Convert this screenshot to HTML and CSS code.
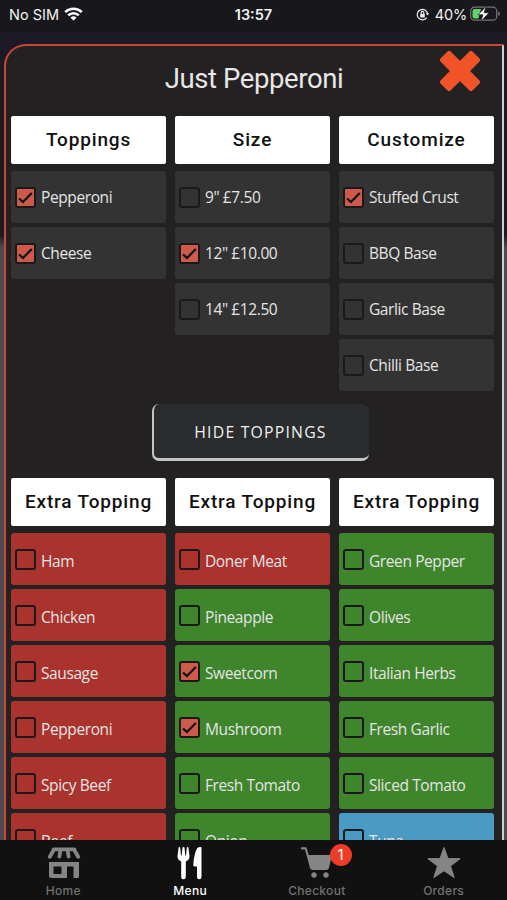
FILE: index.html
```
<!DOCTYPE html>
<html lang="en">

<head>
    <meta charset="UTF-8">
    <meta name="viewport" content="width=device-width, initial-scale=1.0">
    <title>Just Pepperoni</title>
    <link rel="stylesheet" href="styles.css">
</head>

<body>
    <div class="app">
        <!-- Status bar -->
        <header class="status-bar">
            <div class="status-left">
                <span class="carrier">No SIM</span>
                <svg width="19" height="14" viewBox="0 0 19 14" fill="none" stroke="#fff" stroke-width="2.5">
                    <path d="M1.2 5.2a12 12 0 0 1 16.6 0M4.2 8.4a7.6 7.6 0 0 1 10.6 0" />
                    <path d="M9.5 13.6L6.5 10.7a4.3 4.3 0 0 1 6 0z" fill="#fff" stroke="none" />
                </svg>
            </div>
            <span class="clock">13:57</span>
            <div class="status-right">
                <svg width="13" height="13" viewBox="0 0 13 13" fill="none" stroke="#eee" stroke-width="1.2">
                    <path d="M10.7 9.6a5.2 5.2 0 1 1 .9-3.8" />
                    <path d="M9.8 5.2h3.2L11.6 7.6z" fill="#eee" stroke="none" />
                    <path d="M4.2 6h4.6v3.5H4.2z" fill="#eee" stroke="none" />
                    <path d="M5.2 6V4.7a1.3 1.3 0 0 1 2.6 0V6" />
                </svg>
                <span class="battery-text">40%</span>
                <svg width="30" height="16" viewBox="0 0 30 16">
                    <rect x=".7" y="1.2" width="26" height="13" rx="3.8" fill="none" stroke="#77767b" stroke-width="1.2" />
                    <path d="M28.2 5.3q1.7.6 1.7 2.4t-1.7 2.4z" fill="#77767b" />
                    <path d="M4.5 2.9H11L8.5 12.5h-4a2 2 0 0 1-2-2V4.9a2 2 0 0 1 2-2z" fill="#5bd769" />
                    <path d="M16.3.3L8 8.8h5L10.6 15.7 19 6.8h-5z" fill="#fff" stroke="#18171c" stroke-width=".7" />
                </svg>
            </div>
        </header>

        <!-- Pizza options -->
        <main class="content">
            <section class="panel">
                <div class="panel-title">
                    <h1>Just Pepperoni</h1>
                    <button class="close" aria-label="Close">
                        <svg width="42" height="42" viewBox="0 0 42 42" fill="#f15329" stroke="#f15329" stroke-width="5" stroke-linejoin="round">
                            <path d="M10 3.5L21 14.4 32 3.5 38.5 10 27.6 21 38.5 32 32 38.5 21 27.6 10 38.5 3.5 32 14.4 21 3.5 10z" />
                        </svg>
                    </button>
                </div>

                <div class="columns options">
                    <div class="column">
                        <h2>Toppings</h2>
                        <label class="item"><input type="checkbox" checked><span>Pepperoni</span></label>
                        <label class="item"><input type="checkbox" checked><span>Cheese</span></label>
                    </div>
                    <div class="column">
                        <h2>Size</h2>
                        <label class="item"><input type="checkbox"><span>9" £7.50</span></label>
                        <label class="item"><input type="checkbox" checked><span>12" £10.00</span></label>
                        <label class="item"><input type="checkbox"><span>14" £12.50</span></label>
                    </div>
                    <div class="column">
                        <h2>Customize</h2>
                        <label class="item"><input type="checkbox" checked><span>Stuffed Crust</span></label>
                        <label class="item"><input type="checkbox"><span>BBQ Base</span></label>
                        <label class="item"><input type="checkbox"><span>Garlic Base</span></label>
                        <label class="item"><input type="checkbox"><span>Chilli Base</span></label>
                    </div>
                </div>

                <button class="toggle">HIDE TOPPINGS</button>

                <div class="columns extras">
                    <div class="column">
                        <h2>Extra Topping</h2>
                        <label class="item meat"><input type="checkbox"><span>Ham</span></label>
                        <label class="item meat"><input type="checkbox"><span>Chicken</span></label>
                        <label class="item meat"><input type="checkbox"><span>Sausage</span></label>
                        <label class="item meat"><input type="checkbox"><span>Pepperoni</span></label>
                        <label class="item meat"><input type="checkbox"><span>Spicy Beef</span></label>
                        <label class="item meat"><input type="checkbox"><span>Beef</span></label>
                    </div>
                    <div class="column">
                        <h2>Extra Topping</h2>
                        <label class="item meat"><input type="checkbox"><span>Doner Meat</span></label>
                        <label class="item veg"><input type="checkbox"><span>Pineapple</span></label>
                        <label class="item veg"><input type="checkbox" checked><span>Sweetcorn</span></label>
                        <label class="item veg"><input type="checkbox" checked><span>Mushroom</span></label>
                        <label class="item veg"><input type="checkbox"><span>Fresh Tomato</span></label>
                        <label class="item veg"><input type="checkbox"><span>Onion</span></label>
                    </div>
                    <div class="column">
                        <h2>Extra Topping</h2>
                        <label class="item veg"><input type="checkbox"><span>Green Pepper</span></label>
                        <label class="item veg"><input type="checkbox"><span>Olives</span></label>
                        <label class="item veg"><input type="checkbox"><span>Italian Herbs</span></label>
                        <label class="item veg"><input type="checkbox"><span>Fresh Garlic</span></label>
                        <label class="item veg"><input type="checkbox"><span>Sliced Tomato</span></label>
                        <label class="item fish"><input type="checkbox"><span>Tuna</span></label>
                    </div>
                </div>
            </section>
        </main>

        <!-- Bottom tabs -->
        <nav class="tab-bar">
            <a class="tab">
                <svg width="36" height="34" viewBox="0 0 36 34" fill="currentColor">
                    <path d="M8.500 3.300h21M9 3.500L4.800 10.800M15.600 3.500l-1.200 7M22.400 3.500l1.200 7M29 3.500l4.200 7.300" fill="none" stroke="currentColor" stroke-width="3.800" stroke-linecap="round" stroke-linejoin="round" />
                    <path fill-rule="evenodd" d="M4 16h30v14.500q0 1.500-1.500 1.500H28.500V20.500H22V32H6.500Q4 32 4 29.500zM8.500 20.500v7.500h8v-7.500z" />
                </svg>
                <span>Home</span>
            </a>
            <a class="tab active">
                <svg width="28" height="34" viewBox="0 0 28 34" fill="currentColor">
                    <path d="M2.600 1.500q1.200-1 1.600.300L5 9.500h.7L6.500 1.500q1-1.200 2 0L9.300 9.500h.7L10.800 1.800q.4-1.300 1.600-.3L13.500 10q0 4.200-3.700 5.400V31a2.200 2.200 0 0 1-4.600 0V15.400Q1.500 14.200 1.500 10z" />
                    <path d="M21 2.500q2-2 4.500-1.200V31a2.200 2.200 0 0 1-4.500 0V20.500h-2.500q-1.400 0-1.200-1.800Q18 8 21 2.500z" />
                </svg>
                <span>Menu</span>
            </a>
            <a class="tab">
                <svg width="36" height="34" viewBox="0 0 36 34" fill="currentColor">
                    <path d="M2 1.200h4.500q1 0 1.300 1.200L9.700 9H33l-3.100 13q-.6 2-2.700 2H13.500q-2 0-2.500-1.900L6 3.400H2.900Q1.200 3 2 1.200z" />
                    <circle cx="15" cy="29" r="2.700" />
                    <circle cx="27" cy="29" r="2.700" />
                </svg>
                <b class="badge">1</b>
                <span>Checkout</span>
            </a>
            <a class="tab">
                <svg width="36" height="34" viewBox="0 0 36 34" fill="currentColor" stroke="currentColor" stroke-linejoin="round">
                    <path d="M18 1.500L22 12.500 34.200 12.700 24.500 20 28.200 31.600 18 24.800 7.800 31.600 11.500 20 1.800 12.700 14 12.500z" />
                </svg>
                <span>Orders</span>
            </a>
        </nav>
    </div>
</body>

</html>
```
FILE: styles.css
```
* {
    box-sizing: border-box;
}

body {
    margin: 0;
    background-color: #1c1a26;
    font-family: "Open Sans", "Noto Sans", sans-serif;
}

.app {
    display: flex;
    flex-direction: column;
    height: 900px;
    overflow: hidden;
}

/* Status bar */
.status-bar {
    display: grid;
    grid-template-columns: 1fr auto 1fr;
    align-items: center;
    flex: none;
    height: 32px;
    padding: 0 7px 4px 9px;
    background-color: #18171c;
    color: #f2f2f2;
    font-family: Inter, sans-serif;
    font-size: 14.5px;
}

.status-left,
.status-right {
    display: flex;
    align-items: center;
}

.status-left {
    gap: 5px;
}

.status-right {
    justify-content: flex-end;
}

.battery-text {
    margin: 0 3px 0 6px;
    letter-spacing: -0.2px;
}

.clock {
    margin-right: 2px;
    font-weight: 600;
}

/* Panel */
.content {
    flex: 1;
    min-height: 0;
    overflow: hidden;
    padding: 12px 3px 0 4px;
    background: linear-gradient(#1c1a26 203px, #4c4a54 216px);
}

.panel {
    height: 900px;
    padding: 0 8px 0 5px;
    background-color: #232121;
    border-top: 2px solid #c8492b;
    border-left: 2px solid #c8492b;
    border-right: 2px solid #d0cdd2;
    border-radius: 22px 2px 0 0;
}

.panel-title {
    display: grid;
    grid-template-columns: 58px 1fr 42px;
    height: 70px;
    padding: 4px 13px 0 0;
}

h1 {
    grid-column: 2;
    margin: 0;
    padding-top: 12px;
    color: #e8e6e6;
    font-family: Roboto, sans-serif;
    font-size: 27.5px;
    font-weight: 400;
    letter-spacing: -0.4px;
    line-height: 34px;
    text-align: center;
}

.close {
    width: 42px;
    height: 42px;
    padding: 0;
    background: none;
    border: none;
}

.columns {
    display: grid;
    grid-template-columns: repeat(3, 155px);
    gap: 9px;
}

.options {
    height: 275px;
}

h2 {
    height: 48px;
    margin: 0 0 7px;
    background-color: #fff;
    border-radius: 2px;
    color: #111;
    font-family: Roboto, sans-serif;
    font-size: 19px;
    font-weight: 500;
    letter-spacing: 0.85px;
    line-height: 47px;
    text-align: center;
    white-space: nowrap;
}

.item {
    display: flex;
    align-items: center;
    gap: 5px;
    height: 52px;
    margin-bottom: 4px;
    padding: 0 5px 0 4px;
    background-color: #333;
    border-radius: 3px;
    color: #e4e4e4;
    font-size: 15.5px;
    letter-spacing: -0.4px;
    white-space: nowrap;
}

.item input {
    appearance: none;
    flex: none;
    width: 21px;
    height: 21px;
    margin: 0;
    border: 2px solid #1b1919;
    border-radius: 3px;
}

.item input:checked {
    background: #cf5a4c url("data:image/svg+xml,%3Csvg xmlns='http://www.w3.org/2000/svg' viewBox='0 0 17 17'%3E%3Cpath d='M2 9.500L6 13 14.800 4' fill='none' stroke='%23111' stroke-width='2.300'/%3E%3C/svg%3E");
}

.extras h2 {
    line-height: 48px;
}

.extras .item span {
    padding-top: 4px;
}

.meat {
    background-color: #ab332d;
}

.veg {
    background-color: #3f852c;
}

.fish {
    background-color: #4a9bc4;
}

.toggle {
    display: block;
    width: 217px;
    height: 57px;
    margin: 13px 0 17px 141px;
    padding: 2px 2px 0 0;
    background-color: #2a2c2d;
    border: solid #c4c4c4;
    border-width: 0 0 3px 2px;
    border-radius: 7px;
    color: #f0f0f0;
    font-family: "Open Sans", sans-serif;
    font-size: 15.8px;
    font-weight: 500;
    letter-spacing: 1.2px;
}

/* Bottom tabs */
.tab-bar {
    display: grid;
    grid-template-columns: repeat(4, 1fr);
    flex: none;
    height: 60px;
    background-color: #111;
}

.tab {
    position: relative;
    display: flex;
    flex-direction: column;
    align-items: center;
    padding-top: 6px;
    color: #858585;
    font-family: Inter, sans-serif;
    font-size: 12px;
    font-weight: 500;
    line-height: 15px;
}

.tab span {
    margin-top: 3px;
    color: #727272;
    letter-spacing: 0.3px;
}

.active,
.active span {
    color: #fff;
}

.badge {
    position: absolute;
    top: 4px;
    left: 76px;
    width: 22px;
    height: 22px;
    background-color: #ee3b28;
    border-radius: 50%;
    color: #fff;
    font-size: 15px;
    font-weight: 400;
    line-height: 22px;
    text-align: center;
}
```
